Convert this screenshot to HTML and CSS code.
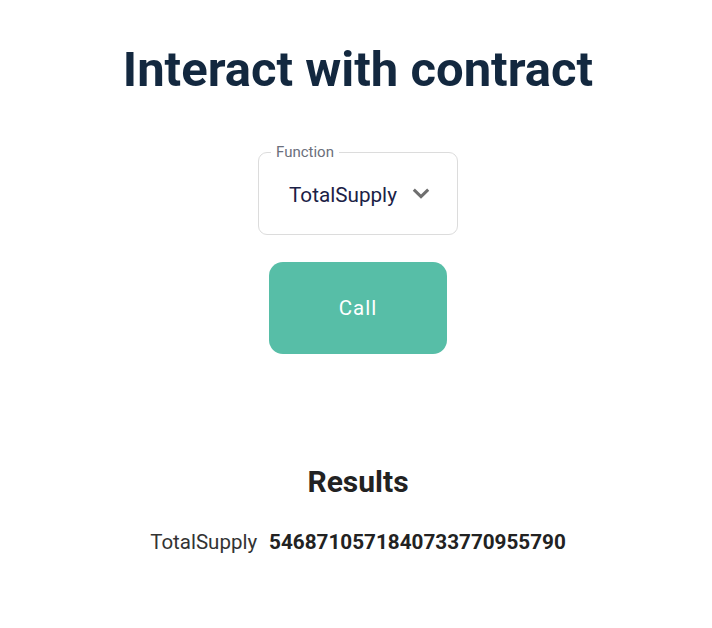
FILE: index.html
```html
<!DOCTYPE html>
<html lang="en">
<head>
<meta charset="utf-8">
<title>Interact with contract</title>
<link rel="stylesheet" href="styles.css">
</head>
<body>
<main class="page">
  <h1 class="title">Interact with contract</h1>
  <div class="select">
    <span class="select-label">Function</span>
    <span class="select-value">TotalSupply</span>
    <svg class="chevron" width="18" height="11" viewBox="0 0 18 11" aria-hidden="true">
      <polyline points="1.8,1.6 9,8.6 16.2,1.6" fill="none" stroke="#6f6f6f" stroke-width="3"/>
    </svg>
  </div>
  <button class="call-btn" type="button">Call</button>
  <h2 class="results-title">Results</h2>
  <div class="result-row">
    <span class="result-key">TotalSupply</span>
    <span class="result-value">5468710571840733770955790</span>
  </div>
</main>
</body>
</html>
```
FILE: styles.css
```css
* { box-sizing: border-box; }
html, body {
  margin: 0;
  padding: 0;
  background: #ffffff;
}
body {
  font-family: Roboto, "Liberation Sans", Arial, sans-serif;
}
.page {
  display: flex;
  flex-direction: column;
  align-items: center;
  padding-top: 41px;
  padding-left: 4px;
}
.title {
  margin: 0;
  font-size: 49px;
  line-height: 57px;
  font-weight: 700;
  color: #13283f;
}
.select {
  position: relative;
  margin-top: 54px;
  width: 200px;
  height: 83px;
  border: 1px solid #dcdcdc;
  border-radius: 9px;
  display: flex;
  align-items: center;
  justify-content: space-between;
  padding: 0 27px 0 30px;
}
.select-label {
  position: absolute;
  left: 12px;
  top: -11px;
  padding: 0 5px;
  background: #ffffff;
  font-size: 15px;
  line-height: 20px;
  color: #6b6f7c;
}
.select-value {
  font-size: 20.7px;
  line-height: 24px;
  color: #1b2146;
  padding-top: 2px;
}
.chevron {
  display: block;
  margin-top: -1px;
}
.call-btn {
  margin-top: 27px;
  width: 178px;
  height: 92px;
  border: none;
  border-radius: 14px;
  background: #57bea7;
  color: #ffffff;
  font-family: Roboto, "Liberation Sans", Arial, sans-serif;
  font-size: 20.5px;
  letter-spacing: 1px;
  padding: 0;
}
.results-title {
  margin: 111px 0 0;
  font-size: 30px;
  line-height: 34px;
  font-weight: 700;
  color: #222222;
}
.result-row {
  margin-top: 31px;
  display: flex;
  gap: 12px;
  font-size: 20.5px;
  line-height: 24px;
  color: #333333;
}
.result-value {
  font-size: 20.7px;
  font-weight: 700;
  color: #222222;
}
```
